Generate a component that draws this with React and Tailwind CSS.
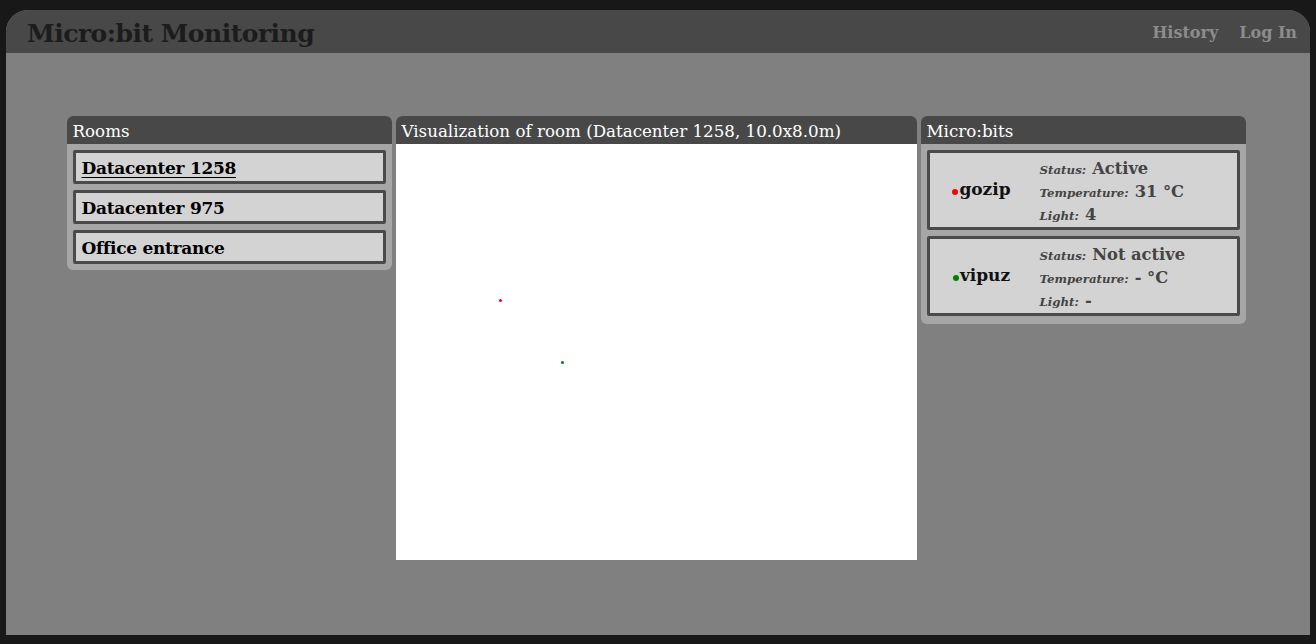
const ROOMS = ['Datacenter 1258', 'Datacenter 975', 'Office entrance']

const BITS = [
  { name: 'gozip', dot: 'bg-[#ff0000]', status: 'Active', temp: '31', light: '4' },
  { name: 'vipuz', dot: 'bg-[#008000]', status: 'Not active', temp: '-', light: '-' },
]

function PanelHeader({ children }) {
  return (
    <div className="h-[28px] bg-[#484848] rounded-t-[6px] px-[6px] text-white text-[16.7px] leading-[31px] whitespace-nowrap">
      {children}
    </div>
  )
}

function Row({ label, children }) {
  return (
    <div className="h-[23px] flex items-baseline gap-[6px]">
      <span className="text-[11.8px] italic font-bold">{label}</span>
      <span className="text-[16.3px] font-bold">{children}</span>
    </div>
  )
}

export default function App() {
  return (
    <div className="min-h-[644px] bg-[#181818] px-[6px] pt-[10px] pb-[9px] flex font-['DejaVu_Serif',serif]">
      <div className="flex-1 flex flex-col rounded-t-[22px] overflow-hidden bg-[#808080]">
        <header className="h-[43px] bg-[#484848] flex items-center justify-between pl-[21px] pr-[13px]">
          <h1 className="text-[25px] font-bold text-[#1c1c1c] tracking-[-0.5px] mt-[4px]">Micro:bit Monitoring</h1>
          <nav className="flex gap-[21px] text-[16px] font-bold text-[#8c8c8c] mt-[3px]">
            <a>History</a>
            <a>Log In</a>
          </nav>
        </header>

        <main className="flex-1 flex justify-center items-start gap-[4px] pt-[63px] pr-[4px]">
          <section className="w-[325px] bg-[#a6a6a6] rounded-[6px]">
            <PanelHeader>Rooms</PanelHeader>
            <div className="flex flex-col gap-[6px] px-[6px] pt-[6px] pb-[6px]">
              {ROOMS.map((r, i) => (
                <div
                  key={r}
                  className="h-[34px] border-[3px] border-[#4a4a4a] rounded-[2px] bg-[#d3d3d3] px-[6px] text-[17px] font-bold text-black leading-[30px] tracking-[-0.3px]"
                >
                  <span className={i === 0 ? 'underline underline-offset-[3px]' : ''}>{r}</span>
                </div>
              ))}
            </div>
          </section>

          <section className="w-[521px]">
            <div className="rounded-t-[6px] overflow-hidden">
              <PanelHeader>Visualization of room (Datacenter 1258, 10.0x8.0m)</PanelHeader>
            </div>
            <div className="relative h-[416px] bg-white">
              <span className="absolute left-[103px] top-[155px] w-[3px] h-[3px] rounded-full bg-[#ff0000]" />
              <span className="absolute left-[165px] top-[217px] w-[3px] h-[3px] rounded-full bg-[#008000]" />
            </div>
          </section>

          <section className="w-[325px] bg-[#a6a6a6] rounded-[6px]">
            <PanelHeader>Micro:bits</PanelHeader>
            <div className="flex flex-col gap-[6px] px-[6px] pt-[6px] pb-[8px]">
              {BITS.map((b) => (
                <div
                  key={b.name}
                  className="h-[80px] border-[3px] border-[#4a4a4a] rounded-[2px] bg-[#d3d3d3] flex items-center"
                >
                  <div className="w-[110px] flex items-center justify-center pr-[6px]">
                    <span className={`w-[6px] h-[6px] rounded-full ${b.dot} mr-[1px] mt-[3px]`} />
                    <span className="text-[17px] font-bold text-[#111]">{b.name}</span>
                  </div>
                  <div className="flex flex-col text-[#444] pt-[3px]">
                    <Row label="Status:">{b.status}</Row>
                    <Row label="Temperature:">{b.temp} °C</Row>
                    <Row label="Light:">{b.light}</Row>
                  </div>
                </div>
              ))}
            </div>
          </section>
        </main>
      </div>
    </div>
  )
}
